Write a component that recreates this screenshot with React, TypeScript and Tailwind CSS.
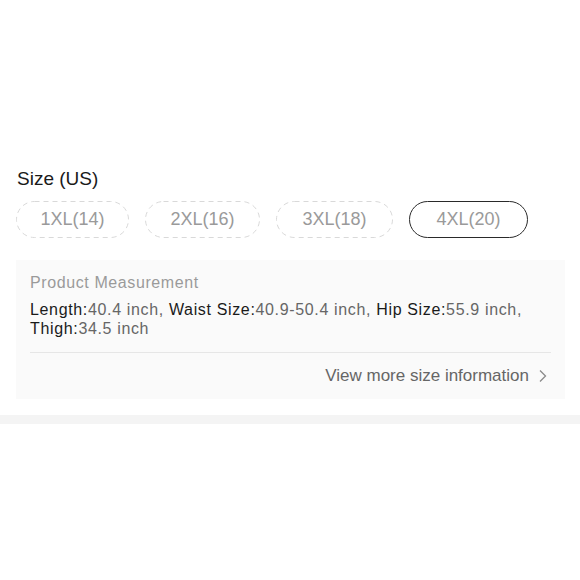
import React from "react";

const sizes = [
  { label: "1XL(14)", w: 113, cls: "w-[113px]", selected: false },
  { label: "2XL(16)", w: 115, cls: "w-[115px]", selected: false },
  { label: "3XL(18)", w: 117, cls: "w-[117px]", selected: false },
  { label: "4XL(20)", w: 119, cls: "w-[119px]", selected: true },
];

function DashedOutline({ w }: { w: number }) {
  const h = 37;
  return (
    <svg
      width={w}
      height={h}
      className="absolute inset-0 pointer-events-none"
      viewBox={`0 0 ${w} ${h}`}
    >
      <rect
        x={0.5}
        y={0.5}
        width={w - 1}
        height={h - 1}
        rx={(h - 1) / 2}
        fill="none"
        stroke="#d9d9d9"
        strokeWidth={1}
        strokeDasharray="5 4"
      />
    </svg>
  );
}

export default function App() {
  return (
    <div
      className="w-[580px] h-[580px] bg-white flex flex-col"
      style={{ fontFamily: '"Liberation Sans", Arial, sans-serif' }}
    >
      <div className="pt-[167px] pl-[17px] text-[19px] leading-[24px] text-[#1a1a1a]">
        Size (US)
      </div>
      <div className="mt-[10px] pl-[16px] flex gap-[16px]">
        {sizes.map((s) =>
          s.selected ? (
            <div
              key={s.label}
              className={`${s.cls} h-[37px] rounded-full border-[1.5px] border-[#2a2a2a] flex items-center justify-center text-[18px] text-[#9a9a9a]`}
            >
              {s.label}
            </div>
          ) : (
            <div
              key={s.label}
              className={`${s.cls} relative h-[37px] flex items-center justify-center text-[18px] text-[#9a9a9a]`}
            >
              <DashedOutline w={s.w} />
              {s.label}
            </div>
          )
        )}
      </div>
      <div className="mt-[22px] ml-[16px] w-[549px] bg-[#fafafa] px-[14px] pt-[13px] pb-[11px]">
        <div className="text-[16px] leading-[20px] text-[#9a9a9a] tracking-[0.6px]">
          Product Measurement
        </div>
        <div className="mt-[7px] text-[16px] leading-[19px] text-[#666] tracking-[0.65px]">
          <span className="text-[#1a1a1a]">Length:</span>40.4 inch,{" "}
          <span className="text-[#1a1a1a]">Waist Size:</span>40.9-50.4 inch,{" "}
          <span className="text-[#1a1a1a]">Hip Size:</span>55.9 inch,{" "}
          <span className="text-[#1a1a1a]">Thigh:</span>34.5 inch
        </div>
        <div className="mt-[14px] h-px bg-[#e6e6e6]" />
        <div className="mt-[11px] flex items-center justify-end gap-[10px] text-[17px] leading-[24px] text-[#666]">
          <span>View more size information</span>
          <svg width="8" height="14" viewBox="0 0 8 14" className="mr-[4px]">
            <path d="M1 1.5 L6.5 7 L1 12.5" fill="none" stroke="#8a8a8a" strokeWidth="1.3" />
          </svg>
        </div>
      </div>
      <div className="mt-[16px] h-[9px] bg-[#f4f4f4]" />
    </div>
  );
}
